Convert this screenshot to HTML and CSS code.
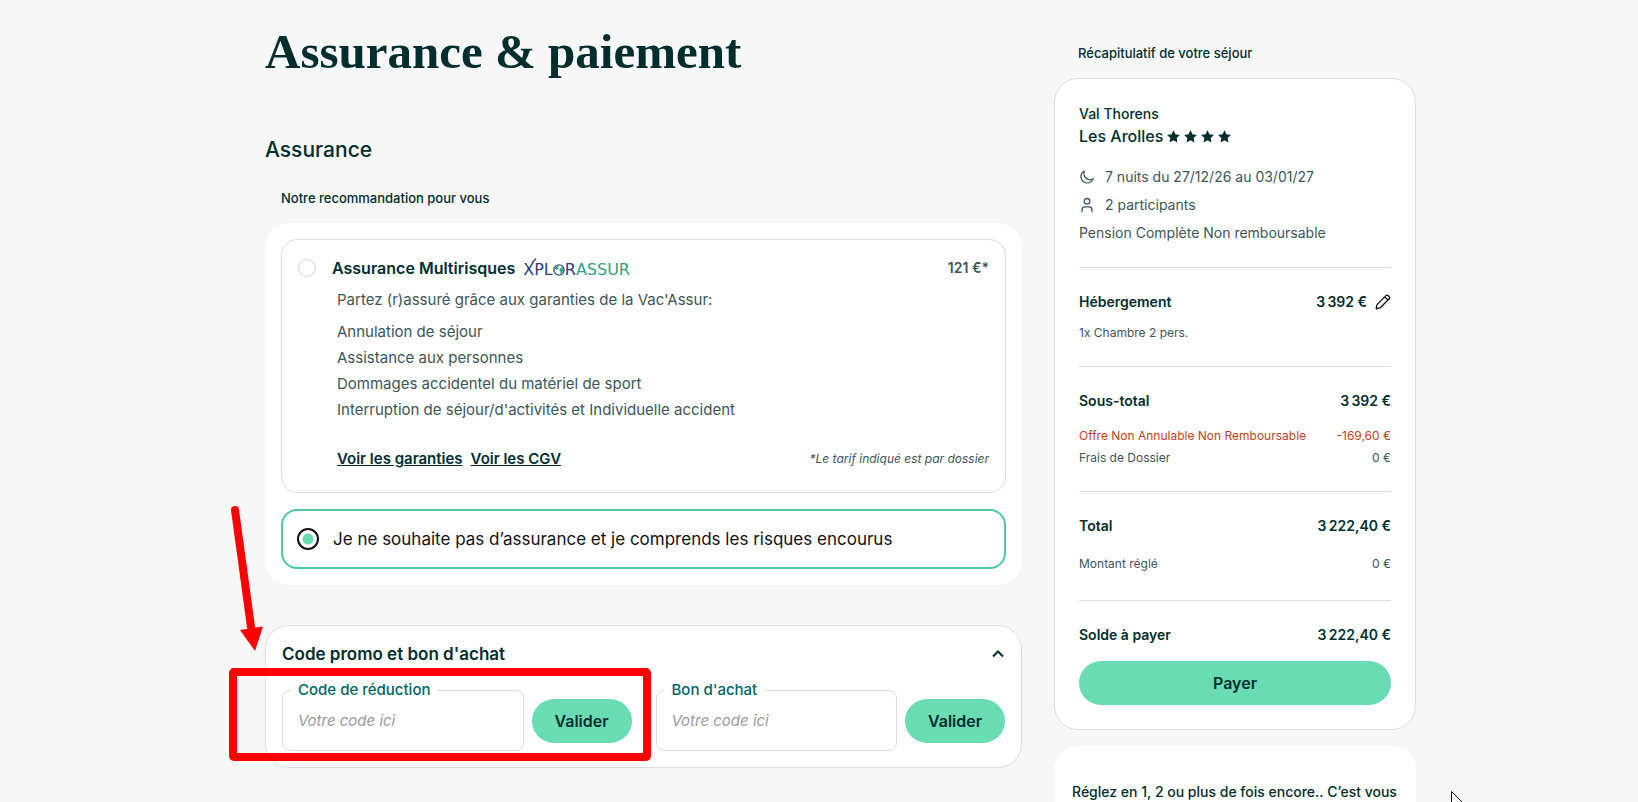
FILE: index.html
```html
<!DOCTYPE html>
<html lang="fr">
<head>
    <meta charset="UTF-8">
    <meta name="viewport" content="width=device-width, initial-scale=1.0">
    <title>Assurance &amp; paiement</title>
    <link rel="stylesheet" href="styles.css">
</head>
<body>
    <div class="page">
        <main class="content">
            <h1 class="page-title">Assurance &amp; paiement</h1>
            <h2 class="section-title">Assurance</h2>
            <p class="caption">Notre recommandation pour vous</p>

            <div class="insurance">
                <div class="option">
                    <div class="option-head">
                        <input type="radio" name="insurance" id="multi" class="radio">
                        <label for="multi" class="option-name">Assurance Multirisques</label>
                        <span class="logo">
                            <span class="logo-blue">XPL</span>
                            <svg class="logo-globe" width="12" height="12" viewBox="0 0 11 11">
                                <circle cx="5.5" cy="5.5" r="4.7" fill="#fff" stroke="#2b4a86" stroke-width="1.2"/>
                                <path d="M1.5 4 4 1.8 5.4 2.6 4.6 4.6 3 5.4zM5.6 5 8.6 2.8 9.6 5.6 8 8.8 6.6 9.2 6.8 7z" fill="#35a27c"/>
                            </svg>
                            <span class="logo-blue">R</span><span class="logo-green">ASSUR</span>
                            <svg class="logo-tail" width="6" height="6" viewBox="0 0 6 6">
                                <path d="M1 5 5 0.500" stroke="#2b3f78" stroke-width="1.3"/>
                            </svg>
                        </span>
                        <span class="option-price">121 €*</span>
                    </div>
                    <div class="option-body">
                        <p class="option-intro">Partez (r)assuré grâce aux garanties de la Vac'Assur:</p>
                        <ul class="guarantees">
                            <li>Annulation de séjour</li>
                            <li>Assistance aux personnes</li>
                            <li>Dommages accidentel du matériel de sport</li>
                            <li>Interruption de séjour/d'activités et Individuelle accident</li>
                        </ul>
                        <div class="option-foot">
                            <a href="#">Voir les garanties</a>
                            <a href="#">Voir les CGV</a>
                            <em class="option-note">*Le tarif indiqué est par dossier</em>
                        </div>
                    </div>
                </div>

                <div class="option option-selected">
                    <input type="radio" name="insurance" id="none" class="radio" checked>
                    <label for="none">Je ne souhaite pas d’assurance et je comprends les risques encourus</label>
                </div>
            </div>

            <section class="promo">
                <div class="promo-head">
                    <h3 class="promo-title">Code promo et bon d'achat</h3>
                    <button type="button" class="toggle" aria-label="Replier">
                        <svg width="14" height="10" viewBox="0 0 14 10">
                            <path d="M2 7.5 7 2.5 12 7.5" fill="none" stroke="#002d2e" stroke-width="2"/>
                        </svg>
                    </button>
                </div>
                <div class="promo-row">
                    <form class="code-form">
                        <fieldset class="field">
                            <legend><label for="code">Code de réduction</label></legend>
                            <input type="text" id="code" placeholder="Votre code ici">
                        </fieldset>
                        <button type="button" class="button">Valider</button>
                    </form>
                    <form class="code-form">
                        <fieldset class="field">
                            <legend><label for="voucher">Bon d'achat</label></legend>
                            <input type="text" id="voucher" placeholder="Votre code ici">
                        </fieldset>
                        <button type="button" class="button">Valider</button>
                    </form>
                </div>

                <!-- Red arrow and frame pointing at the discount code -->
                <svg class="marker" width="422" height="256" viewBox="0 0 422 256">
                    <path d="M6 5 22 122" stroke="#fe0000" stroke-width="8" stroke-linecap="round"/>
                    <path d="M11 125 34 121.500 26 146z" fill="#fe0000"/>
                    <rect x="4" y="167" width="414" height="85" rx="1" fill="none" stroke="#fe0000" stroke-width="8" stroke-linejoin="round"/>
                </svg>
            </section>
        </main>

        <aside class="sidebar">
            <p class="caption caption-summary">Récapitulatif de votre séjour</p>
            <div class="summary">
                <p class="resort">Val Thorens</p>
                <p class="hotel">
                    Les Arolles
                    <span class="stars">
                        <svg width="13" height="13" viewBox="0 0 24 24"><path d="M12 0.500 15.600 8 23.800 9.100 17.800 14.800 19.300 23 12 19 4.700 23 6.200 14.800 0.200 9.100 8.400 8z"/></svg>
                        <svg width="13" height="13" viewBox="0 0 24 24"><path d="M12 0.500 15.600 8 23.800 9.100 17.800 14.800 19.300 23 12 19 4.700 23 6.200 14.800 0.200 9.100 8.400 8z"/></svg>
                        <svg width="13" height="13" viewBox="0 0 24 24"><path d="M12 0.500 15.600 8 23.800 9.100 17.800 14.800 19.300 23 12 19 4.700 23 6.200 14.800 0.200 9.100 8.400 8z"/></svg>
                        <svg width="13" height="13" viewBox="0 0 24 24"><path d="M12 0.500 15.600 8 23.800 9.100 17.800 14.800 19.300 23 12 19 4.700 23 6.200 14.800 0.200 9.100 8.400 8z"/></svg>
                    </span>
                </p>
                <ul class="details">
                    <li>
                        <svg width="16" height="16" viewBox="0 0 16 16" fill="none" stroke="#3c5558" stroke-width="1.2" stroke-linejoin="round">
                            <path d="M5.200 2A6.400 6.400 0 1 0 14.400 9.600Q12.500 11.300 9.800 10.700 3.800 8.800 5.200 2z"/>
                        </svg>
                        7 nuits du 27/12/26 au 03/01/27
                    </li>
                    <li>
                        <svg width="16" height="16" viewBox="0 0 16 16" fill="none" stroke="#3c5558" stroke-width="1.300">
                            <circle cx="8" cy="4.300" r="2.800"/>
                            <path d="M3 15.300V13Q3 9.800 6 9.800H10Q13 9.800 13 13V15.300"/>
                        </svg>
                        2 participants
                    </li>
                    <li>Pension Complète Non remboursable</li>
                </ul>

                <div class="block">
                    <p class="row row-strong">
                        <span>Hébergement</span>
                        <span class="edit">3&#8239;392 €
                            <button type="button" class="toggle" aria-label="Modifier">
                                <svg width="16" height="16" viewBox="0 0 16 16" fill="none" stroke="#111" stroke-width="1.300" stroke-linejoin="round">
                                    <path d="M1.200 14.800 2 10.600 11 1.600Q12.200 0.600 13.600 1.900 15.200 3.400 14.200 4.800L5.300 13.700zM9.800 2.900 13 6"/>
                                </svg>
                            </button>
                        </span>
                    </p>
                    <p class="row row-first">1x Chambre 2 pers.</p>
                </div>
                <div class="block">
                    <p class="row row-strong"><span>Sous-total</span><span>3&#8239;392 €</span></p>
                    <p class="row row-offer"><span>Offre Non Annulable Non Remboursable</span><span>-169,60 €</span></p>
                    <p class="row"><span>Frais de Dossier</span><span>0 €</span></p>
                </div>
                <div class="block">
                    <p class="row row-strong"><span>Total</span><span>3&#8239;222,40 €</span></p>
                    <p class="row row-paid"><span>Montant réglé</span><span>0 €</span></p>
                </div>
                <div class="block block-last">
                    <p class="row row-strong"><span>Solde à payer</span><span>3&#8239;222,40 €</span></p>
                    <button type="button" class="button button-pay">Payer</button>
                </div>
            </div>

            <div class="instalments">
                <p>Réglez en 1, 2 ou plus de fois encore.. C’est vous</p>
            </div>
        </aside>
    </div>

    <svg class="pointer" width="13" height="20" viewBox="0 0 13 20">
        <path d="M0.500 0.500V17L4.500 13.500 7 19 9.500 18 7 12.500H12.500z" fill="#fff" stroke="#111"/>
    </svg>
</body>
</html>
```
FILE: styles.css
```css
/* General Styles */
* {
    box-sizing: border-box;
}

body {
    margin: 0;
    height: 100vh;
    overflow-x: hidden;
    background-color: #f7f7f7;
    color: #002d2e;
    font-family: Inter, "Liberation Sans", sans-serif;
    font-size: 14px;
}

h1, h2, h3, p, ul {
    margin: 0;
    padding: 0;
}

ul {
    list-style: none;
}

svg {
    flex: none;
}

button, input {
    font-family: inherit;
}

.page {
    max-width: 1194px;
    margin: 0 auto;
    padding: 22px 0 0 43px;
    display: flex;
    gap: 32px;
}

.content {
    flex: 1;
}

.page-title {
    font-family: "Liberation Serif", serif;
    font-size: 49px;
    line-height: 60px;
}

.section-title {
    margin-top: 53px;
    font-size: 21px;
    font-weight: 500;
    line-height: 30px;
}

.caption {
    margin: 24px 0 16px;
    padding-left: 16px;
    font-size: 13px;
    font-weight: 500;
    line-height: 18px;
}

/* Insurance options */
.insurance {
    padding: 16px;
    border-radius: 24px;
    background-color: #fff;
    display: flex;
    flex-direction: column;
    gap: 16px;
}

.option {
    padding: 16px 16px 23px;
    border: 1px solid #dcdcdc;
    border-radius: 16px;
}

.option-head {
    display: flex;
    align-items: center;
    line-height: 24px;
}

.radio {
    appearance: none;
    flex: none;
    width: 18px;
    height: 18px;
    margin: 0 16px 0 0;
    border: 1px solid #d4d4d4;
    border-radius: 50%;
}

.radio:checked {
    width: 22px;
    height: 22px;
    margin-right: 14px;
    border: 2px solid #111;
    background: radial-gradient(circle, #6adcb4 5px, #fff 6px);
}

.option-name {
    font-size: 16px;
    font-weight: 600;
}

.option-price {
    margin-left: auto;
    font-weight: 600;
    color: #3c5558;
}

.logo {
    position: relative;
    margin-left: 8px;
    padding-top: 4px;
    display: flex;
    align-items: center;
    font-family: "DejaVu Sans", sans-serif;
    font-size: 16px;
    line-height: 20px;
}

.logo-blue {
    color: #2b3f78;
}

.logo-green {
    color: #35a27c;
}

.logo-tail {
    position: absolute;
    left: 8px;
    top: 2px;
}

.option-body {
    margin-left: 39px;
    color: #3c5558;
    font-size: 15px;
}

.option-intro {
    margin: 8px 0 7px;
    line-height: 24px;
}

.guarantees li {
    line-height: 26px;
}

.option-foot {
    margin-top: 26px;
    display: flex;
    gap: 8px;
    line-height: 20px;
}

.option-foot a {
    color: #002d2e;
    font-weight: 600;
}

.option-note {
    margin-left: auto;
    font-size: 12px;
}

.option-selected {
    height: 60px;
    padding: 0 14px;
    border: 2px solid #4cc9a0;
    display: flex;
    align-items: center;
    color: #111;
    font-size: 17px;
}

/* Promo codes */
.promo {
    position: relative;
    margin-top: 40px;
    padding: 16px;
    border: 1px solid #dcdcdc;
    border-radius: 24px;
    background-color: #fff;
}

.promo-head {
    display: flex;
    justify-content: space-between;
    align-items: center;
}

.promo-title {
    font-size: 17px;
    font-weight: 600;
    line-height: 24px;
}

.toggle {
    padding: 0;
    border: none;
    background: none;
    display: flex;
    cursor: pointer;
}

.promo-row {
    margin-top: 13px;
    display: flex;
    gap: 24px;
}

.code-form {
    flex: 1;
    display: flex;
    align-items: flex-end;
    gap: 8px;
}

.field {
    flex: 1;
    min-width: 0;
    height: 72px;
    margin: 0;
    padding: 0 7px;
    border: 1px solid #dcdcdc;
    border-radius: 8px;
}

.field legend {
    padding: 0 8px;
    color: #006468;
    font-size: 15px;
    font-weight: 500;
    line-height: 22px;
}

.field input {
    width: 100%;
    height: 38px;
    padding: 0 8px;
    border: none;
    outline: none;
    background: none;
    font-size: 15px;
}

.field input::placeholder {
    color: #9a9a9a;
    font-style: italic;
}

.button {
    width: 100px;
    height: 44px;
    margin-bottom: 8px;
    border: none;
    border-radius: 22px;
    background-color: #6adcb4;
    color: #002d2e;
    font-size: 16px;
    font-weight: 600;
    cursor: pointer;
}

.marker {
    position: absolute;
    left: -37px;
    top: -121px;
    pointer-events: none;
}

/* Summary */
.sidebar {
    width: 362px;
}

.caption-summary {
    margin-top: 22px;
    padding-left: 24px;
}

.summary {
    padding: 24px;
    border: 1px solid #dcdcdc;
    border-radius: 24px;
    background-color: #fff;
}

.resort {
    font-weight: 500;
    line-height: 21px;
}

.hotel {
    display: flex;
    gap: 4px;
    font-size: 16px;
    font-weight: 500;
    line-height: 24px;
}

.stars {
    display: flex;
    align-items: center;
    gap: 4px;
    fill: #002d2e;
}

.details {
    margin: 15px 0 20px;
    color: #3c5558;
}

.details li {
    display: flex;
    align-items: center;
    gap: 10px;
    line-height: 28px;
}

.block {
    padding: 22px 0;
    border-top: 1px solid #dcdcdc;
}

.block-last {
    padding-bottom: 0;
}

.row {
    display: flex;
    justify-content: space-between;
    color: #3c5558;
    font-size: 12px;
    line-height: 22px;
}

.row-strong {
    color: #002d2e;
    font-size: 14px;
    font-weight: 600;
    line-height: 24px;
}

.row-first {
    margin-top: 8px;
}

.row-offer {
    margin-top: 12px;
    color: #bd4322;
}

.row-paid {
    margin: 15px 0 3px;
}

.edit {
    display: flex;
    align-items: center;
    gap: 8px;
}

.button-pay {
    display: block;
    width: 100%;
    margin: 14px 0 0;
}

.instalments {
    margin-top: 16px;
    padding: 35px 18px 24px;
    border-radius: 24px;
    background-color: #fff;
    font-weight: 500;
    line-height: 22px;
}

.pointer {
    position: fixed;
    left: 1451px;
    top: 791px;
}
```
